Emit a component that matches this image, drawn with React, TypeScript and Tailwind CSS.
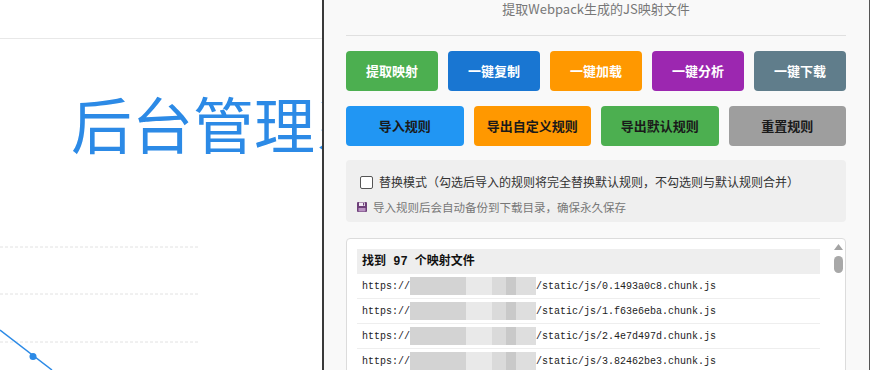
import React from "react";

const sans = "font-['Noto_Sans_CJK_SC','Noto_Sans',sans-serif]";

function Floppy() {
  return (
    <svg width="10" height="10" viewBox="0 0 10 10" className="shrink-0">
      <rect x="0" y="0" width="10" height="10" rx="1" fill="#6d3f78" />
      <rect x="2" y="0.5" width="6" height="3.5" fill="#f2e9f4" />
      <rect x="6" y="1" width="1.2" height="2.5" fill="#6d3f78" />
      <rect x="1.5" y="6" width="7" height="3.5" fill="#b992c2" />
    </svg>
  );
}

function Blur() {
  return (
    <div className="flex h-[18px] w-[126px] shrink-0">
      <div className="w-[56px] bg-[#d3d3d3]" />
      <div className="w-[26px] bg-[#e9e9e9]" />
      <div className="w-[14px] bg-[#dadada]" />
      <div className="w-[10px] bg-[#c9c9c9]" />
      <div className="w-[20px] bg-[#dedede]" />
    </div>
  );
}

const rows = [
  "/static/js/0.1493a0c8.chunk.js",
  "/static/js/1.f63e6eba.chunk.js",
  "/static/js/2.4e7d497d.chunk.js",
  "/static/js/3.82462be3.chunk.js",
  "/static/js/4.a1c93f02.chunk.js",
];

export default function App() {
  return (
    <div className={`flex w-[870px] h-[370px] overflow-hidden bg-white ${sans}`}>
      {/* Left page */}
      <div className="w-[322px] shrink-0 h-full bg-white overflow-hidden flex flex-col">
        <div className="h-[39px] border-b border-[#e8e8e8] shrink-0" />
        <div className="pl-[71px] mt-[53px] text-[61px] leading-[61px] text-[#2c8ae6] whitespace-nowrap shrink-0">
          后台管理系统
        </div>
        <svg width="322" height="217" className="shrink-0">
          <line x1="0" y1="94" x2="198" y2="94" stroke="#e2e2e2" strokeDasharray="3 2" />
          <line x1="0" y1="141" x2="198" y2="141" stroke="#e2e2e2" strokeDasharray="3 2" />
          <line x1="0" y1="189" x2="198" y2="189" stroke="#e2e2e2" strokeDasharray="3 2" />
          <line x1="0" y1="177" x2="52" y2="217" stroke="#2c8ae6" strokeWidth="1.5" />
          <circle cx="33" cy="203.5" r="3.5" fill="#2c8ae6" />
        </svg>
      </div>

      {/* Panel */}
      <div className="flex-1 h-full bg-[#f9f9f9] border-l-2 border-l-[#3a3a3a] border-r border-r-[#555] pl-[22px] overflow-hidden">
        <div className="w-[500px]">
          <div className="text-center text-[13px] leading-[18px] text-[#777]">提取Webpack生成的JS映射文件</div>
          <div className="mt-[17px] h-px bg-[#e0e0e0]" />

          <div className="mt-[15px] grid grid-cols-5 gap-[10px] text-[13px] font-bold text-white">
            <div className="h-[40px] rounded-[4px] bg-[#4caf50] flex items-center justify-center">提取映射</div>
            <div className="h-[40px] rounded-[4px] bg-[#1976d2] flex items-center justify-center">一键复制</div>
            <div className="h-[40px] rounded-[4px] bg-[#ff9800] flex items-center justify-center">一键加载</div>
            <div className="h-[40px] rounded-[4px] bg-[#9c27b0] flex items-center justify-center">一键分析</div>
            <div className="h-[40px] rounded-[4px] bg-[#607d8b] flex items-center justify-center">一键下载</div>
          </div>

          <div className="mt-[15px] grid grid-cols-4 gap-[10px] text-[13px] font-bold text-[#1a1a1a]">
            <div className="h-[40px] rounded-[4px] bg-[#2196f3] flex items-center justify-center">导入规则</div>
            <div className="h-[40px] rounded-[4px] bg-[#ff9800] flex items-center justify-center">导出自定义规则</div>
            <div className="h-[40px] rounded-[4px] bg-[#4caf50] flex items-center justify-center">导出默认规则</div>
            <div className="h-[40px] rounded-[4px] bg-[#9e9e9e] flex items-center justify-center">重置规则</div>
          </div>

          <div className="mt-[14px] h-[62px] rounded-[4px] bg-[#efefef] pt-[13px]">
            <div className="pl-[14px] h-[18px] flex items-center gap-[6px]">
              <input
                type="checkbox"
                className="appearance-none m-0 w-[13px] h-[13px] border border-[#555] rounded-[2px] bg-white shrink-0"
              />
              <span className="text-[12px] leading-[18px] text-[#333]">
                替换模式（勾选后导入的规则将完全替换默认规则，不勾选则与默认规则合并）
              </span>
            </div>
            <div className="pl-[11px] mt-[8px] h-[16px] flex items-center gap-[6px]">
              <Floppy />
              <span className="text-[11.5px] leading-[16px] text-[#777]">导入规则后会自动备份到下载目录，确保永久保存</span>
            </div>
          </div>

          <div className="mt-[16px] h-[200px] bg-white border border-[#dcdcdc] rounded-[4px] flex">
            <div className="ml-[10px] mt-[10px] w-[463px]">
              <div className="h-[25px] bg-[#eeeeee] flex items-center pl-[5px] text-[12px] font-bold text-[#111] font-['Liberation_Mono','Noto_Sans_CJK_SC',monospace] whitespace-pre">
                找到 97 个映射文件
              </div>
              {rows.map((r) => (
                <div
                  key={r}
                  className="h-[25px] border-b border-[#eeeeee] flex items-center pl-[5px] text-[10px] text-[#222] font-['Liberation_Mono',monospace] whitespace-pre"
                >
                  <span>https://</span>
                  <Blur />
                  <span>{r}</span>
                </div>
              ))}
            </div>
            <div className="ml-auto mr-[2px] w-[10px] pt-[5px] flex flex-col items-center">
              <svg width="9" height="6" viewBox="0 0 9 6">
                <polygon points="4.5,0 9,6 0,6" fill="#a3a3a3" />
              </svg>
              <div className="mt-[6px] w-[9px] h-[17px] rounded-full bg-[#a8a8a8]" />
            </div>
          </div>
        </div>
      </div>
    </div>
  );
}
